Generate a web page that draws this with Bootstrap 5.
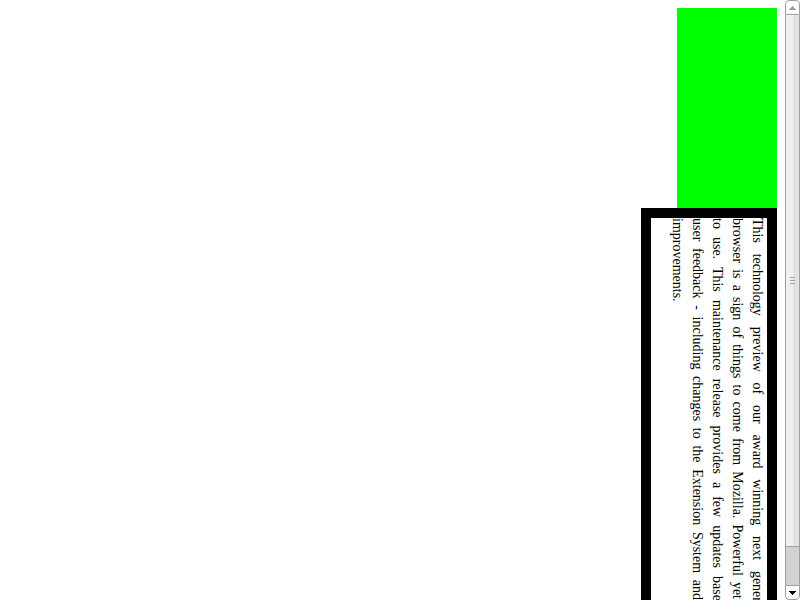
<!DOCTYPE html>
<html lang="en">
<head>
<meta charset="utf-8">
<meta name="viewport" content="width=device-width, initial-scale=1">
<title>Vertical text</title>
<link href="https://cdn.jsdelivr.net/npm/bootstrap@5.3.0/dist/css/bootstrap.min.css" rel="stylesheet">
<style>
  body { background: #fff; color: #000; font-family: "Liberation Serif", serif; }
  .lime-block { width: 100px; height: 200px; background: #0f0; }
  .frame { border: 10px solid #000; padding-left: 16px; }
  .vertical-copy { writing-mode: vertical-rl; height: 412px; font-size: 14px; line-height: 20px; }
  .vertical-copy span { display: block; text-align: justify; text-align-last: justify; white-space: nowrap; }
  .vertical-copy span:last-child { text-align-last: left; }
  .scroller { width: 15px; }
  .scroll-btn { height: 15px; border: 1px solid #a0a0a0; background: #fff; border-radius: 4px 4px 0 0; }
  .scroll-btn.down { border-radius: 0 0 4px 4px; }
  .scroll-thumb { flex: 1 1 0; border: solid #a0a0a0; border-width: 0 1px; background: linear-gradient(90deg, #f0f0f0 50%, #e2e2e2 50%); }
  .scroll-rest { height: 39px; border: solid #a0a0a0; border-width: 1px 1px 0; background: #d2d2d2; }
</style>
</head>
<body class="vh-100 overflow-hidden d-flex">
<main class="flex-grow-1 overflow-hidden p-2 d-flex flex-column align-items-end">
  <div class="lime-block flex-shrink-0"></div>
  <div class="frame flex-shrink-0">
    <p class="vertical-copy m-0"><span>This technology preview of our award winning next generation</span> <span>browser is a sign of things to come from Mozilla. Powerful yet easy</span> <span>to use. This maintenance release provides a few updates based on</span> <span>user feedback - including changes to the Extension System and new</span> <span>improvements.</span></p>
  </div>
</main>
<aside class="scroller flex-shrink-0 d-flex flex-column" aria-label="Scroll bar">
  <button type="button" class="scroll-btn p-0 d-flex align-items-center justify-content-center" aria-label="Scroll up"><svg width="7" height="4" viewBox="0 0 7 4" shape-rendering="crispEdges"><path d="M3 0h1v1h1v1h1v1h1v1H0V3h1V2h1V1h1z" fill="#a0a0a0"/></svg></button>
  <div class="scroll-thumb d-flex align-items-center justify-content-center"><svg width="5" height="7" viewBox="0 0 5 7" shape-rendering="crispEdges"><path d="M0 0h5v1H0zM0 3h5v1H0zM0 6h5v1H0z" fill="#a0a0a0"/></svg></div>
  <div class="scroll-rest"></div>
  <button type="button" class="scroll-btn down p-0 d-flex align-items-center justify-content-center" aria-label="Scroll down"><svg width="7" height="4" viewBox="0 0 7 4" shape-rendering="crispEdges"><path d="M0 0h7v1H6v1H5v1H4v1H3V3H2V2H1V1H0z" fill="#000"/></svg></button>
</aside>
<script src="https://cdn.jsdelivr.net/npm/bootstrap@5.3.0/dist/js/bootstrap.bundle.min.js"></script>
</body>
</html>
